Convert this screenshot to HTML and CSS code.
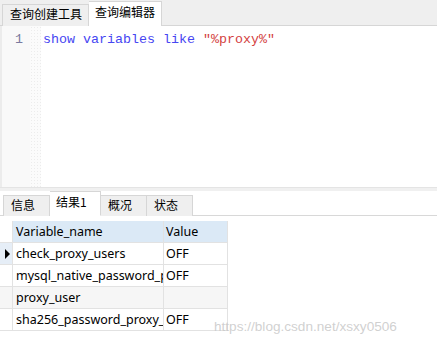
FILE: index.html
```html
<!DOCTYPE html>
<html>
<head>
<meta charset="utf-8">
<link rel="stylesheet" href="styles.css">
</head>
<body>
<div class="app">
  <div class="topbar">
    <div class="tab">查询创建工具</div>
    <div class="tab active">查询编辑器</div>
  </div>
  <div class="editor">
    <div class="strip"></div>
    <div class="gutter">1</div>
    <div class="dots"></div>
    <div class="code"><span class="kw">show variables like</span> <span class="str">"%proxy%"</span></div>
  </div>
  <div class="splitter"></div>
  <div class="restabs">
    <div class="rtab first">信息</div>
    <div class="rtab active">结果1</div>
    <div class="rtab">概况</div>
    <div class="rtab">状态</div>
  </div>
  <div class="grid">
    <div class="ind"></div><div class="hd">Variable_name</div><div class="hd val">Value</div>
    <div class="ind cur"><span class="tri"></span></div><div class="cell">check_proxy_users</div><div class="cell val">OFF</div>
    <div class="ind"></div><div class="cell">mysql_native_password_proxy_users</div><div class="cell val">OFF</div>
    <div class="ind alt"></div><div class="cell alt">proxy_user</div><div class="cell val alt"></div>
    <div class="ind"></div><div class="cell">sha256_password_proxy_users</div><div class="cell val">OFF</div>
  </div>
  <div class="watermark">https://blog.csdn.net/xsxy0506</div>
</div>
</body>
</html>
```
FILE: styles.css
```css
* { box-sizing: border-box; }
html, body { margin: 0; padding: 0; background: #fff; }
body { width: 437px; height: 346px; overflow: hidden; font-family: "Noto Sans", "Noto Sans CJK SC", sans-serif; font-size: 12px; color: #000; }
.app { position: relative; width: 437px; height: 346px; }

.topbar { height: 26px; background: #efefef; border-bottom: 1px solid #d6d6d6; display: flex; align-items: flex-end; padding-left: 2px; }
.tab { height: 22px; margin-bottom: -1px; padding: 0 6px 3px 7px; border: 1px solid #d6d6d6; border-bottom: none; display: flex; align-items: center; font-family: "Noto Sans CJK SC", sans-serif; font-size: 12px; line-height: 14px; background: #efefef; }
.tab.active { height: 25px; background: #fff; border-left: none; padding: 0 6px 4px 6px; }

.editor { height: 162px; display: flex; border-bottom: 1px solid #e4e4e4; }
.strip { width: 2px; background: #ececec; }
.gutter { width: 28px; background: #f9f9f9; text-align: right; padding-right: 7px; padding-top: 6px; font-family: "Liberation Mono", monospace; font-size: 13.33px; line-height: 15px; color: #7a7aa0; }
.dots { width: 11px; background-color: #fbfbfb; background-image: radial-gradient(#ececec 0.6px, transparent 0.8px); background-size: 3px 3px; }
.code { padding-left: 2px; padding-top: 6px; font-family: "Liberation Mono", monospace; font-size: 13.33px; line-height: 15px; white-space: pre; }
.kw { color: #4646f2; }
.str { color: #d43f3f; }

.splitter { height: 3px; background: #f0f0f0; }

.restabs { height: 25px; display: flex; align-items: flex-end; padding-left: 3px; border-bottom: 1px solid #d8d8d8; }
.rtab { height: 21px; margin-bottom: -1px; width: 46px; padding-left: 7px; padding-bottom: 2px; border: 1px solid #d6d6d6; border-left: none; border-bottom: none; background: #efefef; display: flex; align-items: center; font-family: "Noto Sans CJK SC", sans-serif; font-size: 12px; line-height: 14px; }
.rtab.first { border-left: 1px solid #d6d6d6; width: 47px; }
.rtab.active { height: 25px; width: 51px; background: #fff; padding-left: 6px; padding-bottom: 4px; border-bottom: 1px solid #fff; }

.grid { margin-top: 5px; display: grid; grid-template-columns: 13px 151px 64px; grid-auto-rows: 22px; width: 228px; }
.grid > div { border-right: 1px solid #e2e2e2; border-bottom: 1px solid #e2e2e2; }
.ind { position: relative; }
.ind.cur { background: #e6eef7; }
.tri { position: absolute; left: 5px; top: 6px; width: 0; height: 0; border-left: 5px solid #000; border-top: 5px solid transparent; border-bottom: 5px solid transparent; }
.hd { background: #dbe9f6; padding-left: 3px; line-height: 21px; white-space: nowrap; overflow: hidden; font-size: 12.5px; }
.cell { padding-left: 3px; line-height: 21px; white-space: nowrap; overflow: hidden; text-overflow: clip; font-size: 12.5px; }
.val { padding-left: 2px; }
.alt { background: #f6f6f6; }

.watermark { position: absolute; left: 214px; top: 319px; font-family: "Liberation Sans", sans-serif; font-size: 13.6px; color: rgba(200,200,200,0.85); }
```
